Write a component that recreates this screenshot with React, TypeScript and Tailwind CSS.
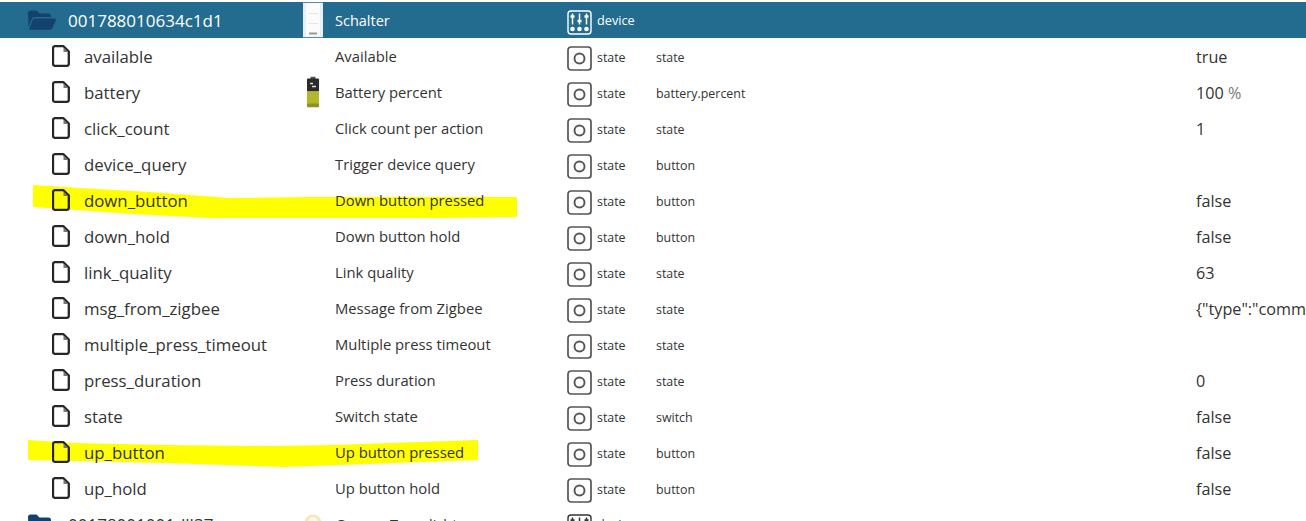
import React from "react";

type Row = { name: string; desc: string; role: string; val?: string; unit?: string; battery?: boolean };

const rows: Row[] = [
  { name: "available", desc: "Available", role: "state", val: "true" },
  { name: "battery", desc: "Battery percent", role: "battery.percent", val: "100", unit: "%", battery: true },
  { name: "click_count", desc: "Click count per action", role: "state", val: "1" },
  { name: "device_query", desc: "Trigger device query", role: "button" },
  { name: "down_button", desc: "Down button pressed", role: "button", val: "false" },
  { name: "down_hold", desc: "Down button hold", role: "button", val: "false" },
  { name: "link_quality", desc: "Link quality", role: "state", val: "63" },
  { name: "msg_from_zigbee", desc: "Message from Zigbee", role: "state", val: '{"type":"command","payload":{}}' },
  { name: "multiple_press_timeout", desc: "Multiple press timeout", role: "state" },
  { name: "press_duration", desc: "Press duration", role: "state", val: "0" },
  { name: "state", desc: "Switch state", role: "switch", val: "false" },
  { name: "up_button", desc: "Up button pressed", role: "button", val: "false" },
  { name: "up_hold", desc: "Up button hold", role: "button", val: "false" },
];

const FileIcon = () => (
  <svg width="18" height="22" viewBox="0 0 18 22" fill="none" className="shrink-0">
    <path d="M3 1.200h8.500l5.300 5.300v12.300a2 2 0 0 1-2 2h-11.800a2 2 0 0 1-2-2v-15.600a2 2 0 0 1 2-2z" stroke="#262626" strokeWidth="2.300" strokeLinejoin="round" />
    <path d="M11.500 2.500v4.500h4.500z" fill="#777777" />
  </svg>
);

const FolderIcon = () => (
  <svg width="28" height="20" viewBox="0 0 28 20" className="shrink-0">
    <path d="M0 3a2.500 2.500 0 0 1 2.500-2.500h6l3 3h9a2.500 2.500 0 0 1 2.500 2.500v1h-16.500a3 3 0 0 0-2.800 2l-3.200 8.500z" fill="#14426f" />
    <path d="M6.800 8.500h19.700a1.400 1.400 0 0 1 1.300 2l-3.300 7.500a3 3 0 0 1-2.700 1.800h-20.800l3.500-9.500a2.600 2.600 0 0 1 2.300-1.800z" fill="#14426f" />
  </svg>
);

const StateIcon = () => (
  <svg width="25" height="25" viewBox="0 0 25 25" fill="none" className="mt-[5px]">
    <rect x="1" y="1" width="23" height="23" rx="3" stroke="#555555" strokeWidth="1.700" />
    <circle cx="12.500" cy="12.500" r="5" stroke="#555555" strokeWidth="1.900" />
  </svg>
);

const DeviceIcon = ({ color = "#ffffff" }: { color?: string }) => (
  <svg width="25" height="25" viewBox="0 0 25 25" fill="none" stroke={color} className="mt-[5px]">
    <rect x="1" y="1" width="23" height="23" rx="3" strokeWidth="1.400" />
    <path d="M5.500 3.500v11M12.500 3.500v11M19.500 3.500v11" strokeWidth="1.500" />
    <path d="M3.500 6.500h4M10.500 11h4M17.500 6.500h4" strokeWidth="2.400" />
    <circle cx="5.500" cy="19" r="2.300" fill={color} stroke="none" />
    <circle cx="12.500" cy="19" r="2.300" fill={color} stroke="none" />
    <circle cx="19.500" cy="19" r="2.300" fill={color} stroke="none" />
  </svg>
);

const SwitchPic = () => (
  <svg width="20" height="35" viewBox="0 0 20 35">
    <rect x="0" y="0" width="20" height="35" fill="#e9eeef" />
    <rect x="3" y="1" width="14" height="33" rx="1" fill="#fbfbfb" />
    <path d="M5 11h10M5 21h10" stroke="#e6e6e6" />
    <rect x="6" y="30" width="8" height="2" fill="#999999" />
  </svg>
);

const BatteryPic = () => (
  <svg width="14" height="31" viewBox="0 0 14 31">
    <rect x="4.500" y="0" width="5" height="3" fill="#555555" />
    <rect x="1" y="2" width="12" height="13" rx="1" fill="#2b2b2b" />
    <rect x="1" y="15" width="12" height="13" fill="#b3b72a" />
    <rect x="1" y="27" width="12" height="4" rx="1" fill="#8e9125" />
    <path d="M4 7h3M6 10h4" stroke="#dddddd" strokeWidth="1.500" />
  </svg>
);

const BulbPic = () => (
  <svg width="18" height="20" viewBox="0 0 18 20">
    <circle cx="9" cy="9" r="8.500" fill="#f8e6b8" />
    <circle cx="9" cy="8" r="5" fill="#fff8e8" />
  </svg>
);

const COLS = "grid grid-cols-[335px_232px_30px_59px_540px_110px] items-center";

export default function App() {
  return (
    <div className="relative h-[521px] w-[1306px] overflow-hidden bg-white pt-[2px] font-['Open_Sans','Noto_Sans',sans-serif] text-[#333333]">
      <svg className="absolute left-0 top-0" width="1306" height="521" viewBox="0 0 1306 521">
        <path d="M33 185L80 188L150 192L230 198L310 197L517 197L517 217L440 218L213 218L133 214L33 207Z" fill="#ffff00" />
        <path d="M28 440L73 443L167 445L267 446L333 445L478 440L478 460L367 464L283 467L167 463L28 460Z" fill="#ffff00" />
      </svg>

      <div className={`${COLS} relative h-9 bg-[#236c8f] text-white`}>
        <div className="flex items-center pl-7">
          <FolderIcon />
          <span className="mt-[1px] ml-[12px] text-[17px]">001788010634c1d1</span>
        </div>
        <div className="relative flex items-center">
          <span className="absolute left-[-32px] top-1/2 -translate-y-1/2"><SwitchPic /></span>
          <span className="mt-[1px] text-[14.500px]">Schalter</span>
        </div>
        <DeviceIcon />
        <span className="col-span-3 mt-[2px] text-[12.700px]">device</span>
      </div>

      {rows.map((r) => (
        <div key={r.name} className={`${COLS} relative h-9 text-[#333333]`}>
          <div className="flex items-center pl-[52px]">
            <FileIcon />
            <span className="mt-[2px] ml-[14px] text-[16.800px]">{r.name}</span>
          </div>
          <div className="relative flex items-center">
            {r.battery && <span className="absolute left-[-29px] top-1/2 -translate-y-1/2"><BatteryPic /></span>}
            <span className="text-[14.800px]">{r.desc}</span>
          </div>
          <StateIcon />
          <span className="mt-[4px] text-[12.400px]">state</span>
          <span className="mt-[4px] text-[12.400px]">{r.role}</span>
          <span className="mt-[2px] whitespace-nowrap text-[16.200px]">
            {r.val}
            {r.unit && <span className="text-[#777777]"> {r.unit}</span>}
          </span>
        </div>
      ))}

      <div className={`${COLS} relative h-9 text-[#333333]`}>
        <div className="flex items-center pl-7">
          <FolderIcon />
          <span className="mt-[1px] ml-[12px] text-[17px]">00178001001dll37</span>
        </div>
        <div className="relative flex items-center">
          <span className="absolute left-[-31px] top-1/2 -translate-y-1/2"><BulbPic /></span>
          <span className="mt-[1px] text-[14.500px]">Gruppe Tageslicht</span>
        </div>
        <DeviceIcon color="#333333" />
        <span className="mt-[2px] text-[12.700px]">device</span>
      </div>
    </div>
  );
}
